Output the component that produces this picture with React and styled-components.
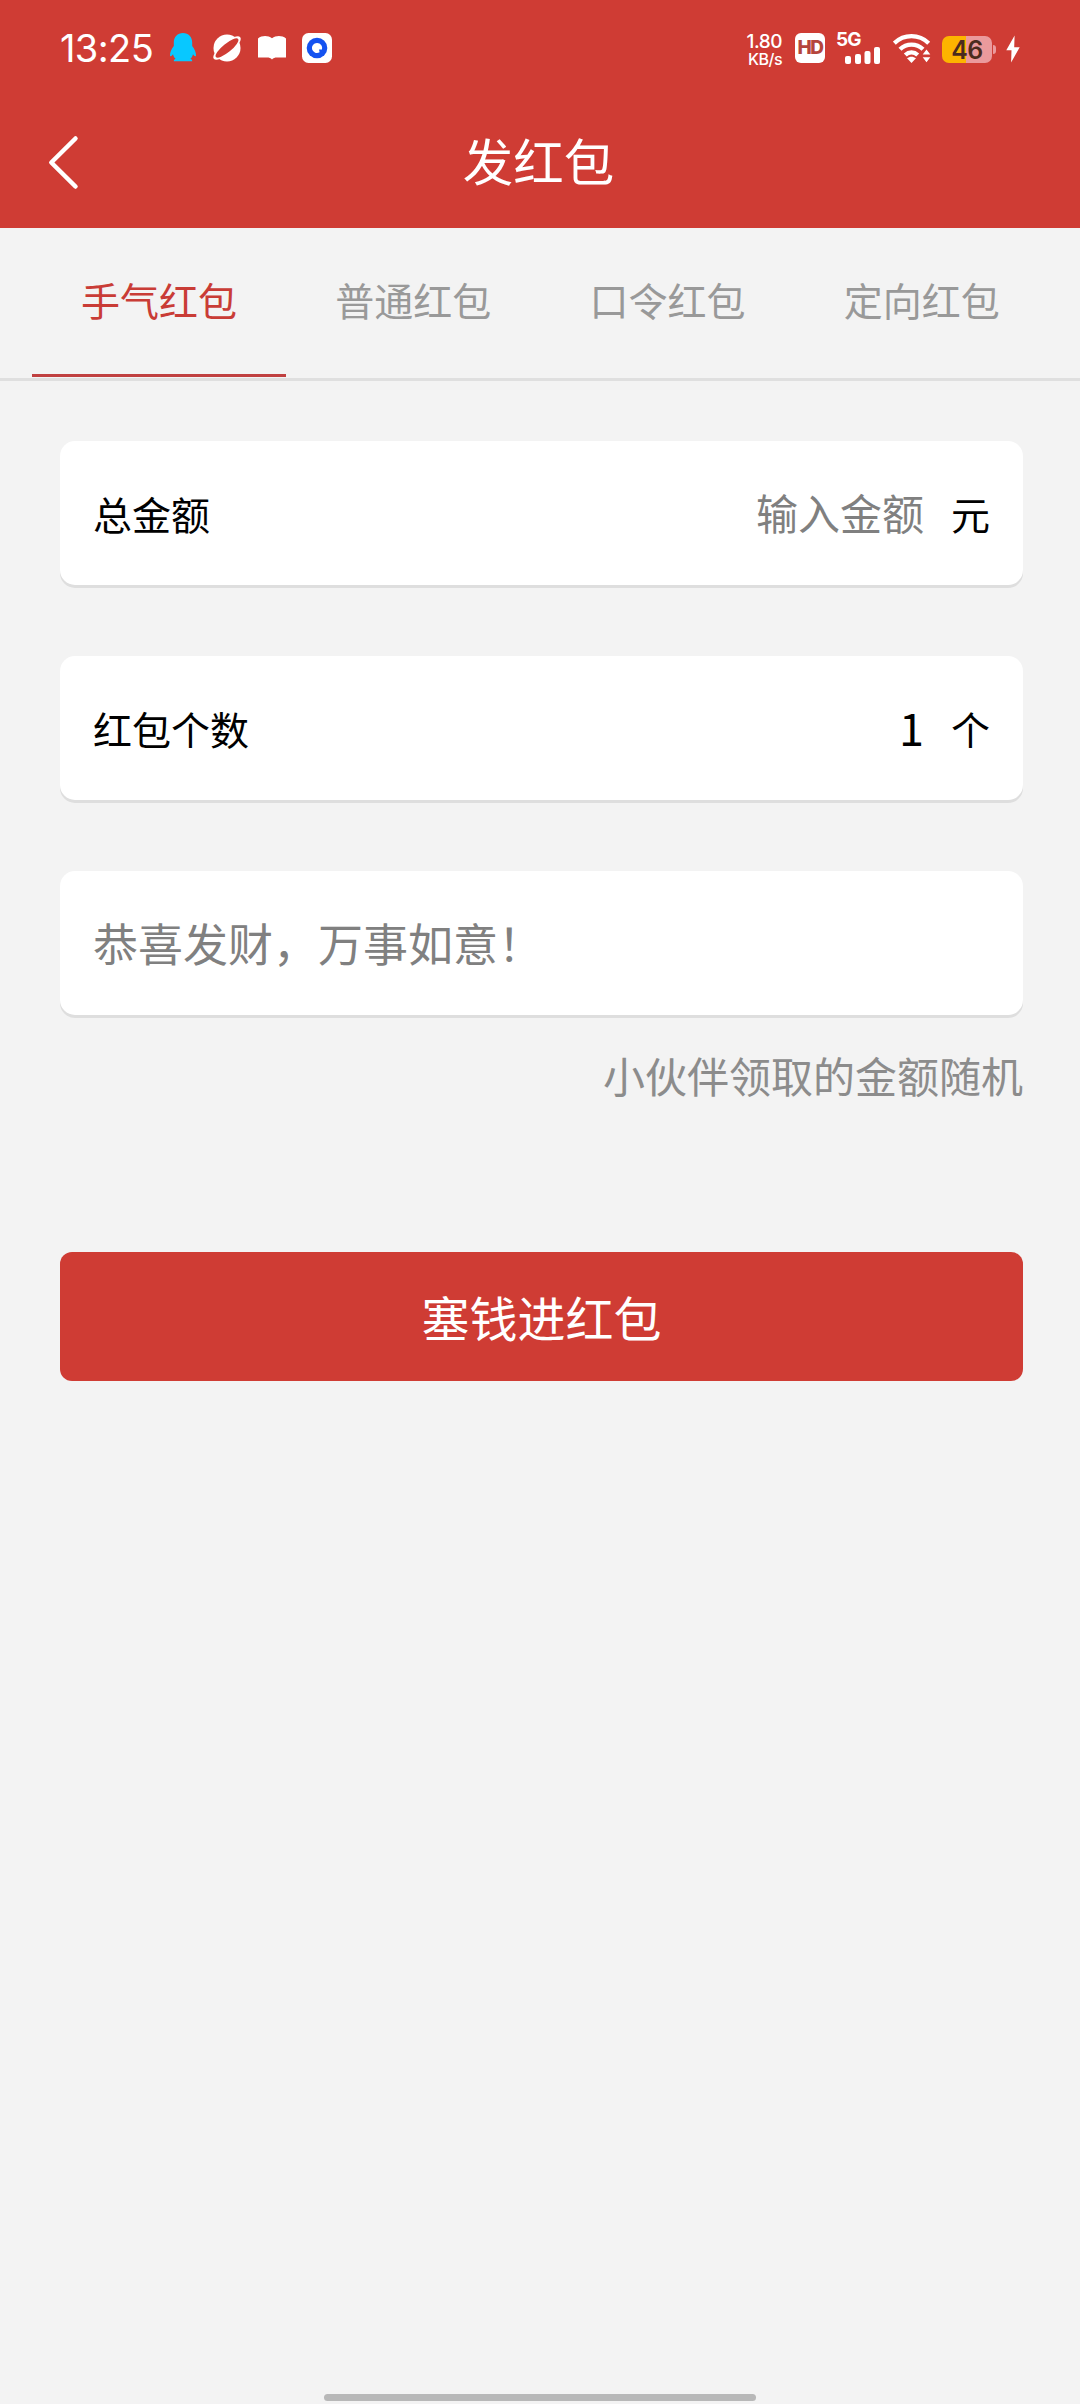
import { useState } from "react";
import styled, { createGlobalStyle } from "styled-components";

const GlobalStyle = createGlobalStyle`
  * {
    box-sizing: border-box;
  }
  body {
    margin: 0;
    background: #f3f3f3;
    font-family: "Noto Sans CJK SC", sans-serif;
  }
`;
const Page = styled.div`
  display: flex;
  flex-direction: column;
  width: 1080px;
  height: 2404px;
  background: #f3f3f3;
  overflow: hidden;
`;
const Header = styled.header`
  height: 228px;
  background: #cf3c34;
  color: white;
`;
const StatusBar = styled.div`
  display: flex;
  justify-content: space-between;
  align-items: flex-start;
  height: 96px;
  padding: 33px 60px 0 60px;
  font-family: "Inter", sans-serif;
`;
const StatusGroup = styled.div`
  display: flex;
  align-items: flex-start;
  height: 30px;
  & svg {
    display: block;
    flex: none;
  }
`;
const Time = styled.div`
  width: 109px;
  font-size: 38px;
  line-height: 30px;
  font-weight: 400;
  letter-spacing: -0.6px;
  white-space: nowrap;
`;
const AppIcons = styled.div`
  display: flex;
  gap: 15px;
`;
const Speed = styled.div`
  display: flex;
  flex-direction: column;
  align-items: flex-end;
  width: 38px;
  margin: -1px 13px 0 0;
  font-weight: 500;
`;
const SpeedLine = styled.span`
  font-size: ${(props) => props.$size}px;
  line-height: ${(props) => props.$size}px;
  letter-spacing: -0.5px;
  white-space: nowrap;
`;
const HdBadge = styled.div`
  width: 30px;
  height: 30px;
  border-radius: 6px;
  background: white;
  color: #b5453d;
  font-size: 19px;
  line-height: 30px;
  font-weight: 800;
  letter-spacing: -1.5px;
  text-align: center;
  margin-right: 11px;
`;
const Signal = styled.div`
  display: flex;
  flex-direction: column;
  width: 46px;
  margin-right: 11px;
  & svg {
    align-self: flex-end;
    margin-right: 1px;
  }
`;
const Network = styled.span`
  font-size: 19px;
  line-height: 14px;
  font-weight: 700;
  letter-spacing: -1px;
`;
const Battery = styled.div`
  width: 50px;
  height: 27px;
  margin: 3px 1px 0 11px;
  border-radius: 7px;
  background: linear-gradient(to right, #fdb400 48%, #eb9a9c 48%);
  color: #4b2b1d;
  font-size: 25px;
  line-height: 28px;
  font-weight: 600;
  letter-spacing: -0.5px;
  text-align: center;
`;
const BatteryTip = styled.div`
  width: 3px;
  height: 9px;
  margin: 12px 10px 0 0;
  border-radius: 0 3px 3px 0;
  background: #eb9a9c;
`;
const NavBar = styled.div`
  display: grid;
  grid-template-columns: 120px 1fr 120px;
  align-items: center;
  height: 132px;
`;
const BackButton = styled.button`
  display: flex;
  padding: 0 0 0 46px;
  border: none;
  background: none;
`;
const Title = styled.h1`
  margin: 0;
  padding: 0 3px 7px 0;
  font-size: 50.5px;
  line-height: 72px;
  font-weight: 400;
  text-align: center;
`;
const Tabs = styled.nav`
  display: flex;
  height: 153px;
  padding: 0 31px 0 32px;
  border-bottom: 3px solid #dfdfdf;
`;
const Tab = styled.button`
  flex: 1;
  height: 149px;
  padding: 0 0 5px;
  border: none;
  border-bottom: 3px solid ${(props) => (props.$active ? "#c04040" : "transparent")};
  background: none;
  color: ${(props) => (props.$active ? "#c93c36" : "#999999")};
  font-family: inherit;
  font-size: 39px;
  line-height: 56px;
`;
const Form = styled.div`
  display: flex;
  flex-direction: column;
  padding: 60px 57px 0 60px;
`;
const Card = styled.label`
  display: flex;
  align-items: center;
  height: 144px;
  margin-bottom: 71px;
  padding: 0 33px 1px;
  border-radius: 15px;
  background: white;
  box-shadow: 0 3px 0 #dedede;
  color: black;
  font-size: 39px;
`;
const Input = styled.input`
  flex: 1;
  min-width: 0;
  height: 90px;
  padding: 0 0 ${(props) => (props.$align ? 2 : 0)}px;
  border: none;
  outline: none;
  background: none;
  color: black;
  font-family: inherit;
  font-size: ${(props) => props.$size || 45}px;
  text-align: ${(props) => props.$align || "left"};
  &::placeholder {
    color: #808080;
    opacity: 1;
  }
`;
const Unit = styled.span`
  margin-left: 27px;
`;
const Hint = styled.p`
  margin: -41px 0 0;
  color: #8c8c8c;
  font-size: 42px;
  line-height: 60px;
  text-align: right;
`;
const SubmitButton = styled.button`
  height: 129px;
  margin-top: 147px;
  padding: 0 0 2px;
  border: none;
  border-radius: 12px;
  background: #cf3c34;
  color: white;
  font-family: inherit;
  font-size: 48px;
`;
const HomeIndicator = styled.div`
  width: 432px;
  height: 7px;
  margin: auto auto 3px;
  border-radius: 4px;
  background: #b8b8b8;
`;

const PenguinIcon = () => (
  <svg width="28" height="30" viewBox="0 0 28 30" fill="#08c8ff">
    <path d="M14 0C8.500 0 4.800 4 4.800 9.500V13C2.500 16 .8 19 1 23c.8.700 2-.4 3-1.800.5 2 1.400 3.500 2.600 4.500-1.300.5-2 1.200-1.800 2.500h18.400c.2-1.300-.5-2-1.800-2.500 1.200-1 2.100-2.500 2.600-4.500 1 1.400 2.200 2.500 3 1.800.2-4-1.500-7-3.800-10V9.500C23.200 4 19.500 0 14 0z" />
  </svg>
);
const PlanetIcon = () => (
  <svg width="30" height="30" viewBox="0 0 30 30">
    <circle cx="15" cy="15" r="13.500" fill="white" />
    <g transform="rotate(-39 15 15)">
      <ellipse cx="15" cy="15" rx="17" ry="5.800" fill="white" />
      <ellipse cx="15" cy="15" rx="14.300" ry="4.300" fill="#cf3c34" />
    </g>
  </svg>
);
const BookIcon = () => (
  <svg width="30" height="30" viewBox="0 0 30 30" fill="white">
    <path d="M1 5.500C5 2.300 11 2.300 15 5.300c4-3 10-3 14 .2V24.500H20c-2.200 0-3.700.6-5 2-1.300-1.400-2.800-2-5-2H1z" />
  </svg>
);
const BrowserIcon = () => (
  <svg width="30" height="30" viewBox="0 0 30 30">
    <rect width="30" height="30" rx="6.500" fill="white" />
    <circle cx="15" cy="15" r="10.300" fill="#1452f0" />
    <path d="M15 10a5 5 0 1 0 2.600 9.200L17 16.500h3A5 5 0 0 0 15 10z" fill="white" />
  </svg>
);
const SignalBars = () => (
  <svg width="36" height="17" viewBox="0 0 36 17" fill="white">
    <rect x="0" y="9" width="6" height="8" rx="2" />
    <rect x="10" y="7" width="6" height="10" rx="2" />
    <rect x="19.500" y="4" width="6" height="13" rx="2" />
    <rect x="29" y="0" width="6" height="17" rx="2" />
  </svg>
);
const WifiIcon = () => (
  <svg width="38" height="30" viewBox="0 0 38 30">
    <g fill="none" stroke="white" strokeWidth="4.300">
      <path d="M1.300 10.200C11 .8 26 .8 35.700 10.200" />
      <path d="M7 16.300c6.500-6.300 16.500-6.300 23 0" />
      <path d="M12.300 22c3.600-3.400 8.800-3.400 12.400 0" />
    </g>
    <path d="M14 25.300c2.800-2.200 6.200-2.200 9 0L18.500 30z" fill="white" />
    <path d="M33.500 16.500l3.800 5h-7.600zM33.500 29.300l3.800-5h-7.600z" fill="white" />
  </svg>
);
const BoltIcon = () => (
  <svg width="14" height="30" viewBox="0 0 14 30" fill="white">
    <path d="M8.600 2.500L.3 17.300h5.200L5.100 29.500 13.700 14.300H8.200z" />
  </svg>
);

const TABS = ["手气红包", "普通红包", "口令红包", "定向红包"];

const StatusRow = () => (
  <StatusBar>
    <StatusGroup>
      <Time>13:25</Time>
      <AppIcons>
        <PenguinIcon />
        <PlanetIcon />
        <BookIcon />
        <BrowserIcon />
      </AppIcons>
    </StatusGroup>
    <StatusGroup>
      <Speed>
        <SpeedLine $size={19}>1.80</SpeedLine>
        <SpeedLine $size={16}>KB/s</SpeedLine>
      </Speed>
      <HdBadge>HD</HdBadge>
      <Signal>
        <Network>5G</Network>
        <SignalBars />
      </Signal>
      <WifiIcon />
      <Battery>46</Battery>
      <BatteryTip />
      <BoltIcon />
    </StatusGroup>
  </StatusBar>
);

const App = () => {
  const [tab, setTab] = useState(0);
  const [amount, setAmount] = useState("");
  const [count, setCount] = useState("1");
  const [wish, setWish] = useState("");

  return (
    <Page>
      <GlobalStyle />
      <Header>
        <StatusRow />
        <NavBar>
          <BackButton>
            <svg width="34" height="56" viewBox="0 0 34 56" fill="none" stroke="white" strokeWidth="4.500" strokeLinecap="round" strokeLinejoin="round">
              <path d="M29.500 4.500L5.300 28.500l24.200 24" />
            </svg>
          </BackButton>
          <Title>发红包</Title>
        </NavBar>
      </Header>
      <Tabs>
        {TABS.map((name, i) => (
          <Tab key={name} $active={i === tab} onClick={() => setTab(i)}>
            {name}
          </Tab>
        ))}
      </Tabs>
      <Form>
        <Card>
          总金额
          <Input
            $size={42}
            $align="right"
            placeholder="输入金额"
            value={amount}
            onChange={(e) => setAmount(e.target.value)}
          />
          <Unit>元</Unit>
        </Card>
        <Card>
          红包个数
          <Input
            $align="right"
            value={count}
            onChange={(e) => setCount(e.target.value)}
          />
          <Unit>个</Unit>
        </Card>
        <Card>
          <Input
            placeholder="恭喜发财，万事如意！"
            value={wish}
            onChange={(e) => setWish(e.target.value)}
          />
        </Card>
        <Hint>小伙伴领取的金额随机</Hint>
        <SubmitButton>塞钱进红包</SubmitButton>
      </Form>
      <HomeIndicator />
    </Page>
  );
};

export default App;
